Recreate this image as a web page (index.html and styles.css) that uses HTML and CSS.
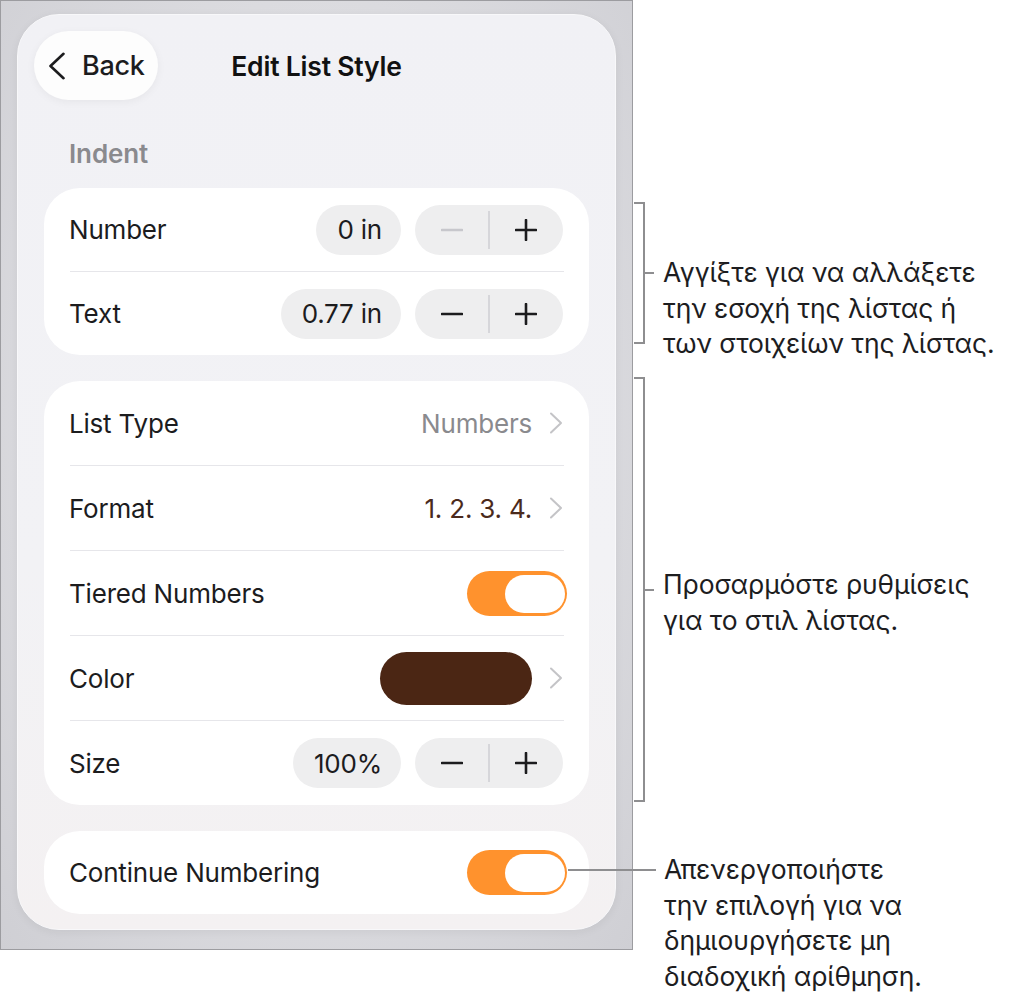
FILE: index.html
```html
<!DOCTYPE html>
<html lang="en">
<head>
<meta charset="utf-8">
<title>Edit List Style</title>
<link rel="stylesheet" href="styles.css">
</head>
<body>
<div class="page">
  <div class="device">
    <div class="panel">
      <div class="header">
        <div class="back">
          <svg class="back-chev" width="18" height="28" viewBox="0 0 18 28"><polyline points="15.5,1.8 2.5,14 15.5,26.2" fill="none" stroke="#1c1c1e" stroke-width="2.6" stroke-linecap="round" stroke-linejoin="round"/></svg>
          <span>Back</span>
        </div>
        <div class="title">Edit List Style</div>
        <div></div>
      </div>

      <div class="section-label">Indent</div>

      <div class="card">
        <div class="row">
          <span class="label">Number</span>
          <div class="controls">
            <span class="pill">0 in</span>
            <div class="stepper">
              <span class="step"><svg width="22" height="22" viewBox="0 0 22 22"><path d="M1 11h20" stroke="#c7c7cc" stroke-width="2.6" stroke-linecap="round"/></svg></span>
              <span class="divider"></span>
              <span class="step"><svg width="22" height="22" viewBox="0 0 22 22"><path d="M11 1v20M1 11h20" stroke="#1c1c1e" stroke-width="2.6" stroke-linecap="round"/></svg></span>
            </div>
          </div>
        </div>
        <div class="sep"></div>
        <div class="row">
          <span class="label">Text</span>
          <div class="controls">
            <span class="pill">0.77 in</span>
            <div class="stepper">
              <span class="step"><svg width="22" height="22" viewBox="0 0 22 22"><path d="M1 11h20" stroke="#1c1c1e" stroke-width="2.6" stroke-linecap="round"/></svg></span>
              <span class="divider"></span>
              <span class="step"><svg width="22" height="22" viewBox="0 0 22 22"><path d="M11 1v20M1 11h20" stroke="#1c1c1e" stroke-width="2.6" stroke-linecap="round"/></svg></span>
            </div>
          </div>
        </div>
      </div>

      <div class="card card-list">
        <div class="row">
          <span class="label">List Type</span>
          <div class="controls">
            <span class="value muted">Numbers</span>
            <svg class="chev" width="14" height="22" viewBox="0 0 14 22"><polyline points="2,1.5 12,11 2,20.5" fill="none" stroke="#c4c4c7" stroke-width="2" stroke-linecap="round" stroke-linejoin="round"/></svg>
          </div>
        </div>
        <div class="sep"></div>
        <div class="row">
          <span class="label">Format</span>
          <div class="controls">
            <span class="value brown">1. 2. 3. 4.</span>
            <svg class="chev" width="14" height="22" viewBox="0 0 14 22"><polyline points="2,1.5 12,11 2,20.5" fill="none" stroke="#c4c4c7" stroke-width="2" stroke-linecap="round" stroke-linejoin="round"/></svg>
          </div>
        </div>
        <div class="sep"></div>
        <div class="row">
          <span class="label">Tiered Numbers</span>
          <div class="toggle"><span class="knob"></span></div>
        </div>
        <div class="sep"></div>
        <div class="row">
          <span class="label">Color</span>
          <div class="controls">
            <span class="swatch"></span>
            <svg class="chev" width="14" height="22" viewBox="0 0 14 22"><polyline points="2,1.5 12,11 2,20.5" fill="none" stroke="#c4c4c7" stroke-width="2" stroke-linecap="round" stroke-linejoin="round"/></svg>
          </div>
        </div>
        <div class="sep"></div>
        <div class="row">
          <span class="label">Size</span>
          <div class="controls">
            <span class="pill">100%</span>
            <div class="stepper">
              <span class="step"><svg width="22" height="22" viewBox="0 0 22 22"><path d="M1 11h20" stroke="#1c1c1e" stroke-width="2.6" stroke-linecap="round"/></svg></span>
              <span class="divider"></span>
              <span class="step"><svg width="22" height="22" viewBox="0 0 22 22"><path d="M11 1v20M1 11h20" stroke="#1c1c1e" stroke-width="2.6" stroke-linecap="round"/></svg></span>
            </div>
          </div>
        </div>
      </div>

      <div class="card">
        <div class="row">
          <span class="label">Continue Numbering</span>
          <div class="toggle"><span class="knob"></span></div>
        </div>
      </div>
    </div>
  </div>

  <div class="callouts">
    <div class="callout callout-indent">
      <div class="bracket bracket-short"></div>
      <div class="note">Αγγίξτε για να αλλάξετε<br>την εσοχή της λίστας ή<br>των στοιχείων της λίστας.</div>
    </div>
    <div class="callout callout-settings">
      <div class="bracket bracket-tall"></div>
      <div class="note note-tall">Προσαρμόστε ρυθμίσεις<br>για το στιλ λίστας.</div>
    </div>
    <div class="callout callout-numbering">
      <div class="leader"></div>
      <div class="note note-leader">Απενεργοποιήστε<br>την επιλογή για να<br>δημιουργήσετε μη<br>διαδοχική αρίθμηση.</div>
    </div>
  </div>
</div>
</body>
</html>
```

FILE: styles.css
```css
* { box-sizing: border-box; }

body {
  margin: 0;
  background: #ffffff;
  font-family: Inter, "Noto Sans", sans-serif;
  color: #1c1c1e;
}

.page {
  display: flex;
  align-items: flex-start;
}

.device {
  width: 633px;
  height: 950px;
  flex: none;
  border: 1px solid #9c9ca0;
  padding: 13px 15px 19px 16px;
  background:
    radial-gradient(ellipse at 50% 45%, #e4e4e8 0%, #dcdce0 55%, #cfcfd4 100%);
}

.panel {
  width: 599px;
  height: 916px;
  border-radius: 42px;
  padding: 16px 26px 17px;
  background: linear-gradient(180deg, #f1f1f5 0%, #f2f2f5 60%, #f4f1f2 100%);
  border: 1px solid #f8f8fa;
  box-shadow: 0 2px 10px rgba(0, 0, 0, 0.06);
  display: flex;
  flex-direction: column;
}

.header {
  margin: 0 -10px;
  height: 69px;
  display: grid;
  grid-template-columns: 1fr auto 1fr;
  align-items: center;
}

.back {
  justify-self: start;
  width: 124px;
  height: 69px;
  border-radius: 35px;
  background: #fdfdfd;
  box-shadow: 0 2px 8px rgba(0, 0, 0, 0.05);
  display: flex;
  align-items: center;
  padding: 0 14px 0 14px;
  gap: 16px;
  font-size: 27px;
  font-weight: 500;
  letter-spacing: -0.3px;
  color: #1c1c1e;
}

.back-chev { flex: none; }

.title {
  font-size: 26.5px;
  font-weight: 600;
  letter-spacing: -0.2px;
  color: #111;
}

.section-label {
  margin: 39px 0 0 0;
  height: 30px;
  line-height: 30px;
  padding-left: 25px;
  font-size: 26px;
  font-weight: 600;
  color: #8a8a8e;
  letter-spacing: -0.1px;
}

.card {
  margin-top: 19px;
  background: #ffffff;
  border-radius: 36px;
  flex: none;
}

.card-list { margin-top: 26px; }
.card-list .row { height: 84px; }
.card:last-child { margin-top: 26px; }

.row {
  height: 83px;
  padding: 0 26px 0 25px;
  display: flex;
  align-items: center;
  justify-content: space-between;
}

.label {
  font-size: 26px;
  letter-spacing: -0.2px;
  color: #1c1c1e;
}

.sep {
  height: 1px;
  margin: 0 25px 0 26px;
  background: #e6e6ea;
}

.controls {
  display: flex;
  align-items: center;
  gap: 14px;
}

.pill {
  height: 50px;
  border-radius: 25px;
  padding: 0 19px 0 21px;
  background: #eeeeef;
  display: flex;
  align-items: center;
  font-size: 26px;
  letter-spacing: -0.2px;
  color: #1c1c1e;
}

.stepper {
  width: 148px;
  height: 50px;
  border-radius: 25px;
  background: #eeeeef;
  display: flex;
  align-items: center;
}

.step {
  flex: 1;
  display: flex;
  justify-content: center;
  align-items: center;
}

.divider {
  width: 1.5px;
  height: 38px;
  background: #d6d6da;
}

.value {
  font-size: 26px;
  letter-spacing: -0.2px;
  margin-right: 3px;
}

.muted { color: #8a8a8e; }
.brown { color: #4b2a1c; }

.chev { flex: none; }

.swatch {
  width: 152px;
  height: 53px;
  border-radius: 27px;
  background: #4b2614;
  margin-right: 3px;
}

.toggle {
  width: 100px;
  height: 45px;
  border-radius: 23px;
  background: #ff922d;
  padding: 4px 2px 3px;
  margin-right: -4px;
  display: flex;
  justify-content: flex-end;
}

.knob {
  width: 60px;
  height: 38px;
  border-radius: 19px;
  background: #ffffff;
}

/* callouts */
.callouts {
  position: relative;
  z-index: 1;
  display: flex;
  flex-direction: column;
  font-family: Inter, "Noto Sans", sans-serif;
  color: #1d1d1f;
}

.callout {
  display: flex;
  align-items: flex-start;
  flex: none;
}

.bracket {
  position: relative;
  width: 11px;
  margin-left: 1px;
  border: 2px solid #8e8e90;
  border-left: none;
  flex: none;
}

.bracket::after {
  content: "";
  position: absolute;
  left: 100%;
  top: calc(50% - 1px);
  width: 11px;
  height: 2px;
  background: #8e8e90;
}

.callout-indent { margin-top: 202px; height: 142px; }
.bracket-short { height: 142px; }

.callout-settings { margin-top: 33px; height: 425px; }
.bracket-tall { height: 425px; }

.note {
  font-size: 26.5px;
  line-height: 35.5px;
  letter-spacing: -0.1px;
  white-space: nowrap;
  margin-left: 18px;
  margin-top: 53px;
}

.note-tall { margin-top: 190px; }

.callout-numbering {
  margin-top: 50px;
  margin-left: -65px;
}

.leader {
  width: 88px;
  height: 2px;
  margin-top: 17px;
  background: #8e8e90;
  flex: none;
}

.note-leader {
  margin-left: 8px;
  margin-top: 0;
}
```
